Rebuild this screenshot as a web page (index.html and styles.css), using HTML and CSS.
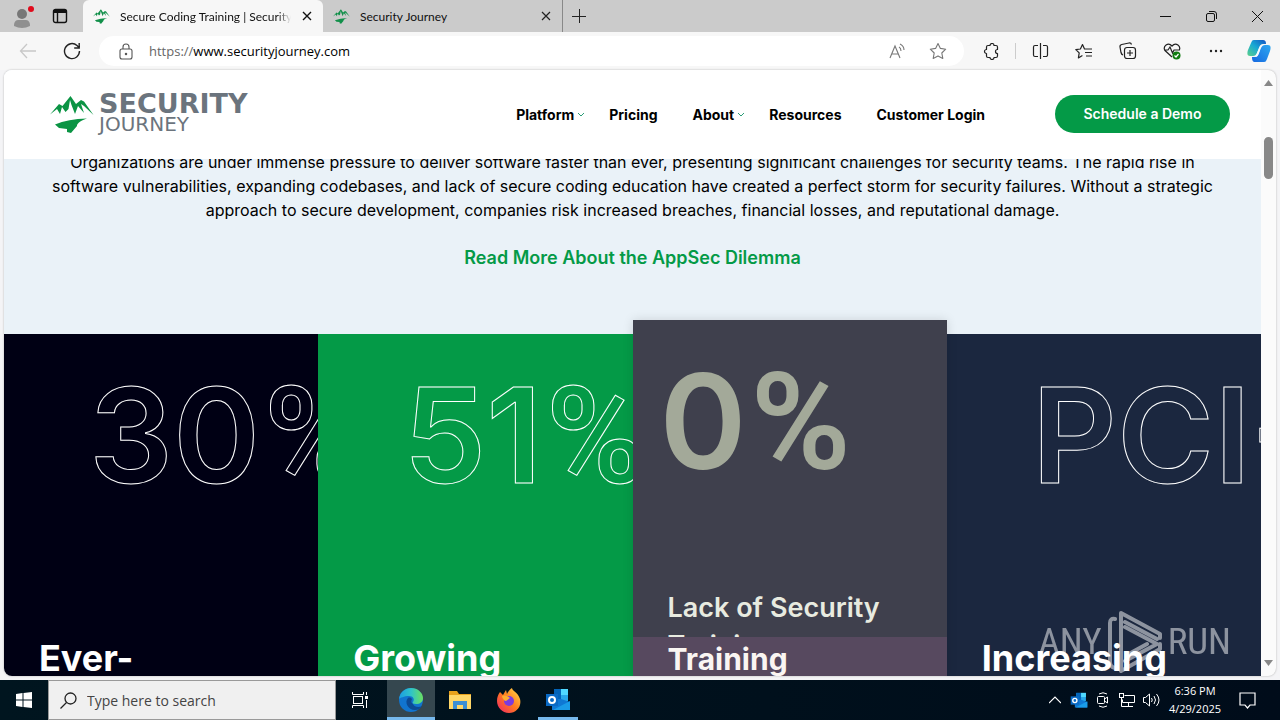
FILE: index.html
```html
<!DOCTYPE html>
<html lang="en">
<head>
<meta charset="utf-8">
<title>Secure Coding Training | Security Journey</title>
<link rel="stylesheet" href="styles.css">
</head>
<body>
<svg class="defs" aria-hidden="true">
  <symbol id="mountains" viewBox="0 0 44 37">
    <path d="M0 18.500L9 8l3.500 2L20.500 0l5.500 8 5-4 3 1.500L43.500 19l-9.500-9-3-2 3 9-6-7-3 8-3.500-9-1.500-5-1.500 9-3 3-3.500-5L10 18l-3-5zM5 28.500Q18 23 37 22.500C29 25 27 28 27 30L21 37l-4-1v-3L9 32z"/>
  </symbol>
  <symbol id="outlook" viewBox="0 0 26 24">
    <path fill="#28a8ea" d="M9 1h14v12H9z"/><path fill="#0364b8" d="M9 1h7v11H9z"/><path fill="#50d9ff" d="M16 1h7v6h-7z"/>
    <path fill="#0f78d4" d="M7 11h9l9 3v8H7z"/><path fill="#1a9be8" d="M8 22l17-9v9z"/><path fill="#0a6ac4" d="M1 6h12v12H1z"/>
    <circle cx="7" cy="12" r="3" fill="none" stroke="#fff" stroke-width="2"/>
  </symbol>
</svg>

<div class="desktop">
  <header class="tabbar">
    <button class="profile" aria-label="Profile">
      <svg width="24" height="26" viewBox="0 0 24 26"><circle cx="12" cy="11" r="5" fill="#777"/><path d="M4 23c0-5 2-6 5-6h6c3 0 5 1 5 6q-8 4-16 0z" fill="#8f8f8f"/><circle cx="21" cy="6" r="3" fill="#e00b1c"/></svg>
    </button>
    <button class="workspaces" aria-label="Tab actions">
      <svg width="16" height="16" viewBox="0 0 16 16" fill="none" stroke="#111" stroke-width="1.400"><rect x="1.500" y="1.500" width="13" height="13" rx="2"/><path d="M2 3.500h12" stroke-width="3"/><path d="M5.500 4v10"/></svg>
    </button>
    <div class="tab tab-active">
      <svg class="favicon" width="17" height="17"><use href="#mountains"/></svg>
      <span class="tab-title">Secure Coding Training | Security Journey</span>
      <button class="tab-close" aria-label="Close tab"><svg width="10" height="10" viewBox="0 0 10 10" stroke="#111" stroke-width="1.400"><path d="M1 1l8 8M9 1l-8 8"/></svg></button>
    </div>
    <div class="tab">
      <svg class="favicon" width="17" height="17"><use href="#mountains"/></svg>
      <span class="tab-title">Security Journey</span>
      <button class="tab-close" aria-label="Close tab"><svg width="10" height="10" viewBox="0 0 10 10" stroke="#222" stroke-width="1.200"><path d="M1 1l8 8M9 1l-8 8"/></svg></button>
    </div>
    <button class="new-tab" aria-label="New tab"><svg width="14" height="14" viewBox="0 0 14 14" stroke="#222"><path d="M0 7.500h14M7.500 0v14"/></svg></button>
    <div class="window-buttons">
      <button aria-label="Minimize"><svg width="11" height="11" viewBox="0 0 11 11" stroke="#111"><path d="M0 5.500h11"/></svg></button>
      <button aria-label="Restore"><svg width="11" height="11" viewBox="0 0 11 11" stroke="#111" fill="none"><rect x=".5" y="2.500" width="8" height="8" rx="1.500"/><path d="M3 .5h5q2.500 0 2.500 2.500v5"/></svg></button>
      <button aria-label="Close"><svg width="11" height="11" viewBox="0 0 11 11" stroke="#111"><path d="M0 0l11 11M11 0L0 11"/></svg></button>
    </div>
  </header>

  <div class="toolbar">
    <button class="tool" aria-label="Back"><svg width="18" height="16" viewBox="0 0 18 16" fill="none" stroke="#c8c8c8" stroke-width="1.300"><path d="M17 8H2M8 1L1.500 8 8 15"/></svg></button>
    <button class="tool" aria-label="Refresh"><svg width="18" height="18" viewBox="0 0 18 18" fill="none" stroke="#222" stroke-width="1.400"><path d="M16.500 9A7.500 7.500 0 1 1 14 3.500L16 5.500M16.200 1v5h-5"/></svg></button>
    <div class="address">
      <svg width="14" height="17" viewBox="0 0 14 17" fill="none" stroke="#555" stroke-width="1.100"><rect x="1" y="6" width="12" height="10" rx="2"/><path d="M4 6V4a3 3 0 0 1 6 0v2"/><circle cx="7" cy="11" r=".7" fill="#555"/></svg>
      <label class="scheme" for="url">https://</label>
      <input class="url" id="url" type="text" value="www.securityjourney.com">
      <button class="address-tool" aria-label="Read aloud"><svg width="18" height="17" viewBox="0 0 18 17" fill="none" stroke="#777" stroke-width="1.100"><path d="M1 15L6 3l5 12M3 11h6M10 4q2 1 2 4M11 1q4 2 4 6"/></svg></button>
      <button class="address-tool" aria-label="Add to favorites"><svg width="18" height="18" viewBox="0 0 18 18" fill="none" stroke="#777" stroke-width="1.100" stroke-linejoin="round"><path d="M9 1.500l2.400 4.900 5.300.8-3.900 3.800 1 5.400L9 13.900l-4.800 2.500 1-5.400L1.300 7.200l5.300-.8z"/></svg></button>
    </div>
    <button class="tool" aria-label="Extensions"><svg width="17" height="17" viewBox="0 0 17 17" fill="none" stroke="#222" stroke-width="1.200" stroke-linejoin="round"><path d="M5 2.500h2a2 2 0 0 1 4 0h2q1.500 0 1.500 1.500v2.500a2 2 0 1 0 0 4V13q0 1.500-1.500 1.500h-2a2 2 0 0 1-4 0H5q-1.500 0-1.500-1.500v-2.500a2 2 0 1 1 0-4V4q0-1.500 1.500-1.500z"/></svg></button>
    <span class="divider"></span>
    <button class="tool" aria-label="Split screen"><svg width="17" height="16" viewBox="0 0 17 16" fill="none" stroke="#222" stroke-width="1.200"><path d="M6 2.500H3A1.500 1.500 0 0 0 1.500 4v8A1.500 1.500 0 0 0 3 13.500h3M11 2.500h3A1.500 1.500 0 0 1 15.500 4v8a1.500 1.500 0 0 1-1.500 1.500h-3M8.500 0v16"/></svg></button>
    <button class="tool" aria-label="Favorites"><svg width="18" height="17" viewBox="0 0 18 17" fill="none" stroke="#222" stroke-width="1.200" stroke-linejoin="round"><path d="M12 6L9.500 6 7.500 1.500 5.400 6 .8 6.600l3.400 3.300-.8 5 4-2.300M11 6h6M10 9.500h7M11 13h6"/></svg></button>
    <button class="tool" aria-label="Collections"><svg width="18" height="18" viewBox="0 0 18 18" fill="none" stroke="#222" stroke-width="1.200"><rect x="5.500" y="5.500" width="11" height="11" rx="2.500"/><path d="M11 8v6M8 11h6M4 13Q2.500 12.500 2 10.500L1 5q-.3-2 1.700-2.500L10 1q2-.3 2.500 1.500"/></svg></button>
    <button class="tool" aria-label="Browser essentials"><svg width="18" height="18" viewBox="0 0 18 18" fill="none" stroke="#222" stroke-width="1.200"><path d="M9 15L2 8.500C-.5 4.500 5-.5 9 4c4-4.500 9.500.5 7 4.500M1 8h4l2-3 2.500 6L11 8h5"/><circle cx="13.500" cy="13.500" r="4" fill="#107c10" stroke="none"/><path d="M11.500 13.500l1.500 1.500 2.500-3" stroke="#fff"/></svg></button>
    <button class="tool" aria-label="Settings and more"><svg width="14" height="4" viewBox="0 0 14 4" fill="#222"><circle cx="2" cy="2" r="1.200"/><circle cx="7" cy="2" r="1.200"/><circle cx="12" cy="2" r="1.200"/></svg></button>
    <button class="tool copilot" aria-label="Copilot">
      <svg width="24" height="24" viewBox="0 0 24 24"><defs><linearGradient id="cp1" x1="0" y1="1" x2="1" y2="0"><stop offset="0" stop-color="#5bd08a"/><stop offset=".5" stop-color="#18a9d4"/><stop offset="1" stop-color="#1454c4"/></linearGradient><linearGradient id="cp2" x1="0" y1="1" x2="1" y2="0"><stop offset="0" stop-color="#1668e0"/><stop offset="1" stop-color="#2ea8f0"/></linearGradient></defs>
      <path fill="url(#cp1)" d="M7 1h9c2 0 3 1 3 4h-3c-2 0-3 1-4 4l-2 5c-1 2-2 3-4 3H3c-3 0-3-3-2-6l3-7c1-2 1-3 3-3z"/><path fill="url(#cp2)" d="M17 23H8c-2 0-3-1-3-5h3c2 0 3-1 4-4l2-5c1-2 2-3 4-3h3c3 0 3 3 2 6l-3 8c-1 2-1 3-3 3z"/><path fill="#f4fbff" d="M12 9c1-2 2-3 4-3h-1c-1 1-1 2-2 4l-1 4c-1 2-2 4-4 4H7c2 0 2-2 3-4z"/></svg>
    </button>
  </div>

  <main class="viewport">
    <div class="page">
      <header class="site-header">
        <a class="logo" href="#" aria-label="Security Journey">
          <svg width="44" height="37"><use href="#mountains"/></svg>
          <span class="logo-text"><span class="logo-strong">SECURITY</span><span class="logo-light">JOURNEY</span></span>
        </a>
        <nav class="site-nav">
          <a class="has-menu" href="#">Platform<svg class="chevron" width="8" height="6" viewBox="0 0 8 6"><path d="M1 1l3 3 3-3"/></svg></a>
          <a href="#">Pricing</a>
          <a class="has-menu" href="#">About<svg class="chevron" width="8" height="6" viewBox="0 0 8 6"><path d="M1 1l3 3 3-3"/></svg></a>
          <a href="#">Resources</a>
          <a href="#">Customer Login</a>
        </nav>
        <a class="demo" href="#">Schedule a Demo</a>
      </header>

      <section class="intro">
        <p>Organizations are under immense pressure to deliver software faster than ever, presenting significant challenges for security teams. The rapid rise in<br>software vulnerabilities, expanding codebases, and lack of secure coding education have created a perfect storm for security failures. Without a strategic<br>approach to secure development, companies risk increased breaches, financial losses, and reputational damage.</p>
        <a class="more" href="#">Read More About the AppSec Dilemma</a>
      </section>

      <section class="cards">
        <article class="card card-night"><div class="figure">30<span class="percent">%</span></div><h2>Ever-</h2></article>
        <article class="card card-green"><div class="figure">51<span class="percent">%</span></div><h2>Growing</h2></article>
        <article class="card card-raised">
          <div class="raised-top"><div class="figure figure-solid">0<span class="percent">%</span></div><h3>Lack of Security<br>Training</h3></div>
          <div class="raised-bottom"><h3>Training</h3></div>
        </article>
        <article class="card card-navy"><div class="figure">PCI-</div><h2>Increasing</h2></article>
      </section>
    </div>
    <div class="scrollbar">
      <svg width="9" height="6" viewBox="0 0 9 6"><path d="M0 6l4.500-6L9 6z"/></svg>
      <span class="thumb"></span>
      <svg class="scroll-down" width="9" height="6" viewBox="0 0 9 6"><path d="M0 0l4.500 6L9 0z"/></svg>
    </div>
  </main>

  <footer class="taskbar">
    <button class="task" aria-label="Start"><svg width="16" height="16" viewBox="0 0 16 16" fill="#fff"><path d="M0 2l6.500-1v6.500H0zM7.500 1L16 0v7.500H7.500zM0 8.500h6.500V15L0 14zM7.500 8.500H16V16l-8.500-1z"/></svg></button>
    <div class="search">
      <svg width="17" height="17" viewBox="0 0 17 17" fill="none" stroke="#222" stroke-width="1.300"><circle cx="10.500" cy="6.500" r="5.500"/><path d="M6.500 10.500L.5 16.500"/></svg>
      <input type="text" aria-label="Search" placeholder="Type here to search">
    </div>
    <button class="task" aria-label="Task view"><svg width="16" height="16" viewBox="0 0 16 16" fill="none" stroke="#fff"><rect x="1.500" y="4.500" width="9" height="7"/><path d="M.5 0v2.500h11V0M.5 16v-2.500h11V16M14.500 0v3M14.500 8v8"/><path d="M13 5.500h3" stroke-width="3"/></svg></button>
    <div class="apps">
      <button class="task task-active" aria-label="Microsoft Edge"><svg width="26" height="26" viewBox="0 0 26 26"><defs><linearGradient id="eg" x1="0" y1="0" x2="1" y2="0"><stop offset="0" stop-color="#1b9de2"/><stop offset=".5" stop-color="#2fc3c9"/><stop offset="1" stop-color="#6be05f"/></linearGradient></defs><circle cx="13" cy="13" r="12" fill="#1174cf"/><path fill="url(#eg)" d="M1 12C2 5 7 1 13 1c7 0 12 5 12 10 0 4-3 6-7 6-3 0-4-1-3-2 2-3 0-6-4-6-5 0-9 2-10 3z"/><path fill="#0c4a94" d="M10 11c-4 4 0 12 7 12 3 0 5-1 7-4-3 2-8 1-9-2-2-1-2-3-1-5-1-1-2-2-4-1z"/></svg></button>
      <button class="task" aria-label="File Explorer"><svg width="24" height="20" viewBox="0 0 24 20"><path fill="#e8a21c" d="M1 1h8l2 3h12v15H1z"/><path fill="#ffd768" d="M1 5h22v14H1z"/><path fill="#3c8fd4" d="M5 11h14v8h-4v-4H9v4H5z"/></svg></button>
      <button class="task" aria-label="Firefox"><svg width="24" height="25" viewBox="0 0 24 25"><defs><linearGradient id="fx" x1="1" y1="0" x2="0" y2="1"><stop offset="0" stop-color="#ffe14a"/><stop offset=".5" stop-color="#ff7a1f"/><stop offset="1" stop-color="#f0206a"/></linearGradient></defs><path fill="url(#fx)" d="M3 4l3 3 3-5 1 4c1-2 3-5 5-6 0 3 6 4 8 11 2 8-4 14-11 14S0 19 0 13c0-4 1-6 3-9z"/><circle cx="12" cy="13" r="5" fill="#7a3be0"/><path fill="#ffac30" d="M5 8c3-1 6 0 8 2-2 1-3 3-5 3-1-1-3-3-3-5z"/></svg></button>
      <button class="task task-open" aria-label="Outlook"><svg width="26" height="24"><use href="#outlook"/></svg></button>
    </div>
    <div class="tray">
      <button aria-label="Show hidden icons"><svg width="12" height="8" viewBox="0 0 12 8" fill="none" stroke="#fff" stroke-width="1.200"><path d="M0 7l6-6 6 6"/></svg></button>
      <button aria-label="Outlook"><svg width="18" height="17"><use href="#outlook"/></svg></button>
      <button aria-label="Meet now"><svg width="12" height="16" viewBox="0 0 12 16" fill="none" stroke="#fff"><rect x=".5" y="4.500" width="7" height="7" rx="1"/><path d="M7.500 7l3-2v6l-3-2M2 2q4-2.500 8 0M2 14q4 2.500 8 0"/></svg></button>
      <button aria-label="Network"><svg width="16" height="14" viewBox="0 0 16 14" fill="none" stroke="#fff"><path d="M5.500 2.500h10v7h-12v-3M9.500 10v3M5 13.500h9M2.500 5v8.500H5"/><rect x=".5" y=".5" width="4" height="4"/></svg></button>
      <button aria-label="Volume"><svg width="17" height="14" viewBox="0 0 17 14" fill="none" stroke="#fff"><path d="M.5 4.500h2L6.500 1v12L2.500 9.500h-2zM8.500 5q1.500 2 0 4M11 3q3 4 0 8M13.500 1q5 6 0 12"/></svg></button>
    </div>
    <div class="clock"><span>6:36 PM</span><span>4/29/2025</span></div>
    <button class="notify" aria-label="Notifications"><svg width="17" height="17" viewBox="0 0 17 17" fill="none" stroke="#fff" stroke-width="1.200"><path d="M1 1h15v12h-5l-2.500 3L6 13H1z"/></svg></button>
  </footer>

  <div class="watermark" aria-hidden="true">
    <span>ANY</span>
    <svg width="58" height="64" viewBox="0 0 58 64" fill="none" stroke="#fff" stroke-width="4" stroke-linejoin="round" stroke-linecap="round"><path d="M9 9Q4 8 4 13v39q0 5 5 6M19 17l32 17-32 17M51 29L19 12M15 61V3l39 21v4M15 61l39-22v-5M21 45l20-11"/></svg>
    <span>RUN</span>
  </div>
</div>
</body>
</html>
```
FILE: styles.css
```css
* { box-sizing: border-box; }

body {
  margin: 0;
  font-family: "Open Sans", "Noto Sans", sans-serif;
  font-size: 12px;
  color: #111;
}

button {
  display: flex;
  align-items: center;
  justify-content: center;
  padding: 0;
  border: 0;
  background: none;
  flex: none;
}

input {
  min-width: 0;
  padding: 0;
  border: 0;
  outline: 0;
  background: none;
  font: inherit;
  color: inherit;
}

a { color: inherit; text-decoration: none; }
h2, h3, p { margin: 0; }
svg { flex: none; display: block; }
.defs { position: absolute; width: 0; height: 0; }

.desktop {
  position: relative;
  display: flex;
  flex-direction: column;
  height: 100vh;
  overflow: hidden;
  background: #f4f4f6;
}

/* Tab strip */
.tabbar {
  display: flex;
  flex: none;
  height: 32px;
  background: #cbcbcb;
}
.profile { width: 44px; }
.workspaces { width: 32px; margin-right: 7px; }
.tab {
  display: flex;
  align-items: center;
  width: 240px;
  padding: 0 10px;
  gap: 10px;
  border-right: 1px solid #888;
}
.tab-active { background: #f7f7f7; border: 0; border-radius: 6px 6px 0 0; }
.favicon { fill: #12904a; }
.tab-title {
  flex: 1;
  overflow: hidden;
  font-family: Lato, "Open Sans", sans-serif;
  font-size: 12px;
  white-space: nowrap;
}
.tab-active .tab-title {
  -webkit-mask-image: linear-gradient(90deg, #000 92%, transparent);
  mask-image: linear-gradient(90deg, #000 92%, transparent);
}
.tab-close { width: 12px; height: 20px; }
.new-tab { width: 32px; }
.window-buttons { display: flex; margin-left: auto; }
.window-buttons button { width: 46px; }

/* Address row */
.toolbar {
  display: flex;
  flex: none;
  align-items: center;
  height: 38px;
  padding: 0 0 0 6px;
  background: #f7f7f7;
}
.tool { width: 44px; height: 32px; }
.copilot { width: 42px; }
.divider { width: 1px; height: 16px; margin: 0 2px; background: #ccc; }
.address {
  display: flex;
  flex: 1;
  align-items: center;
  height: 30px;
  margin: 0 5px;
  padding: 0 6px 0 20px;
  border-radius: 15px;
  background: #fff;
  font-size: 13px;
}
.scheme { margin-left: 16px; color: #666; }
.url { flex: 1; color: #000; }
.address-tool { width: 40px; height: 28px; }

/* Page area */
.viewport {
  display: flex;
  flex: 1;
  min-height: 0;
  margin: 0 4px 4px;
  overflow: hidden;
  border-radius: 8px;
  background: #fbfbfb;
  box-shadow: 0 0 2px #aaa;
}
.page {
  position: relative;
  display: flex;
  flex: 1;
  flex-direction: column;
  min-width: 0;
  overflow: hidden;
  background: #eaf2f8;
  font-family: Inter, "Liberation Sans", sans-serif;
}
.scrollbar {
  display: flex;
  flex-direction: column;
  align-items: center;
  width: 15px;
  padding: 10px 0;
  fill: #888;
}
.thumb { width: 9px; height: 42px; margin-top: 51px; border-radius: 5px; background: #888; }
.scroll-down { margin-top: auto; }

.site-header {
  position: absolute;
  inset: 0 0 auto;
  z-index: 2;
  display: flex;
  align-items: center;
  height: 88px;
  padding: 0 31px 0 46px;
  background: #fff;
  box-shadow: 0 1px #fff;
}
.logo { display: flex; align-items: center; gap: 5px; fill: #0b9444; color: #6b747d; }
.logo-text { display: flex; flex-direction: column; font-family: "DejaVu Sans", sans-serif; }
.logo-strong { font-size: 27px; line-height: 20px; font-weight: 700; }
.logo-light { font-size: 20px; line-height: 20px; }
.site-nav {
  display: flex;
  gap: 35px;
  margin-left: auto;
  font-size: 14px;
  font-weight: 700;
  color: #000;
}
.has-menu { position: relative; }
.chevron {
  position: absolute;
  left: 100%;
  top: 6px;
  margin-left: 3px;
  fill: none;
  stroke: #2a9d78;
}
.demo {
  width: 175px;
  margin-left: 70px;
  border-radius: 19px;
  background: #049a47;
  color: #fff;
  font-size: 14px;
  font-weight: 600;
  line-height: 38px;
  text-align: center;
}

.intro {
  flex: none;
  padding: 80px 0 63px;
  text-align: center;
  white-space: nowrap;
}
.intro p { font-size: 16px; line-height: 24px; color: #000; }
.more {
  display: inline-block;
  margin-top: 23px;
  font-size: 18px;
  line-height: 26px;
  font-weight: 600;
  color: #049a47;
}

.cards {
  display: grid;
  grid-template-columns: repeat(4, minmax(0, 1fr));
  flex: 1;
  min-height: 0;
}
.card {
  display: flex;
  flex-direction: column;
  min-height: 0;
  padding: 20px 0 0 35px;
  overflow: hidden;
  color: #fff;
}
.card-night { background: #000014; }
.card-green { background: #049a47; }
.card-navy { background: #1b273f; }
.figure {
  height: 162px;
  margin-left: 50px;
  font-size: 132px;
  line-height: 162px;
  font-weight: 600;
  color: transparent;
  white-space: nowrap;
  -webkit-text-stroke: 1px #fff;
}
.percent { margin-left: 4px; font-family: Roboto, Inter, sans-serif; font-size: 136px; }
.card h2 { margin-top: 120px; font-size: 36px; line-height: 44px; font-weight: 700; }
.card-raised {
  z-index: 1;
  margin-top: -14px;
  padding: 0;
  background: #57495f;
  box-shadow: 0 0 10px #0002;
}
.raised-top {
  flex: none;
  height: 317px;
  padding: 20px 0 0 35px;
  overflow: hidden;
  background: #3f404d;
  color: #e8ebe0;
}
.figure-solid { margin-left: -8px; color: #a3a999; -webkit-text-stroke: 0; }
.card h3 { font-size: 27px; line-height: 38px; font-weight: 600; }
.raised-top h3 { margin-top: 87px; }
.raised-bottom { padding: 3px 0 0 35px; color: #faf5f2; }
.raised-bottom h3 { font-size: 30px; font-weight: 700; }

/* Taskbar */
.taskbar {
  display: flex;
  flex: none;
  height: 40px;
  background: linear-gradient(90deg, #00151f, #00101c 60%, #000c1a);
  color: #fff;
}
.task { width: 48px; border-bottom: 3px solid transparent; border-top: 3px solid transparent; }
.search {
  display: flex;
  align-items: center;
  gap: 10px;
  width: 288px;
  padding: 0 11px;
  border: 1px solid #999;
  background: #f0f0f0;
  color: #333;
  font-size: 14px;
}
.search input { flex: 1; }
.search input::placeholder { color: #444; opacity: 1; }
.apps { display: flex; gap: 1px; margin-left: 3px; }
.task-active { border-top-color: #35474f; border-bottom-color: #76b9ed; background: #35474f; }
.task-open { background: linear-gradient(#76b9ed, #76b9ed) center bottom / 40px 3px no-repeat border-box; }
.tray { display: flex; margin-left: auto; }
.tray button { width: 24px; }
.clock {
  display: flex;
  flex-direction: column;
  justify-content: center;
  width: 64px;
  font-size: 11px;
  text-align: center;
  line-height: 18px;
}
.notify { width: 40px; margin-right: 13px; }

.watermark {
  position: absolute;
  right: 49px;
  bottom: 46px;
  z-index: 3;
  display: flex;
  align-items: center;
  gap: 4px;
  opacity: .5;
  color: #fff;
  font-family: "Roboto Condensed", Roboto, sans-serif;
  font-size: 37px;
  line-height: 40px;
}
```
